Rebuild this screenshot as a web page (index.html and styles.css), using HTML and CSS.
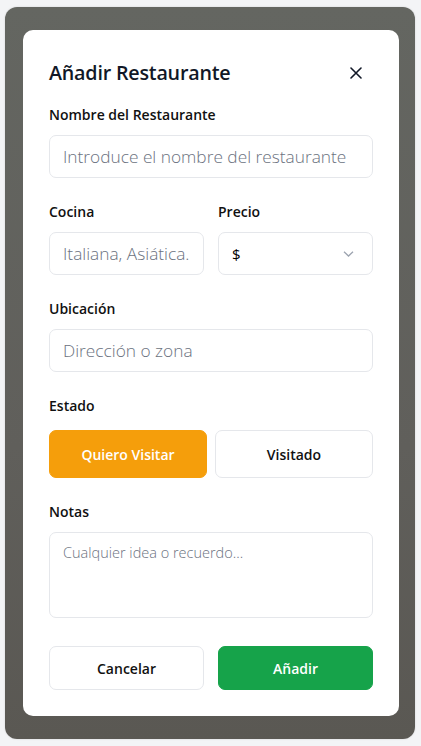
FILE: index.html
```html
<!DOCTYPE html>
<html lang="es">
<head>
<meta charset="utf-8">
<title>Añadir Restaurante</title>
<link rel="stylesheet" href="styles.css">
</head>
<body>
<div class="screen">
  <div class="overlay">
    <div class="modal">
      <div class="modal-head">
        <h2 class="title">Añadir Restaurante</h2>
        <button class="close" type="button" aria-label="Cerrar">
          <svg width="12" height="12" viewBox="0 0 12 12"><path d="M1 1L11 11M11 1L1 11" stroke="#111827" stroke-width="1.6" stroke-linecap="round"/></svg>
        </button>
      </div>

      <div class="field">
        <label class="label">Nombre del Restaurante</label>
        <input class="input" type="text" placeholder="Introduce el nombre del restaurante">
      </div>

      <div class="row">
        <div class="field">
          <label class="label">Cocina</label>
          <input class="input" type="text" placeholder="Italiana, Asiática...">
        </div>
        <div class="field">
          <label class="label">Precio</label>
          <div class="select">
            <span class="select-value">$</span>
            <svg class="chev" width="11" height="6" viewBox="0 0 11 6"><path d="M1 0.8L5.5 5L10 0.8" fill="none" stroke="#9ca3af" stroke-width="1.3"/></svg>
          </div>
        </div>
      </div>

      <div class="field">
        <label class="label">Ubicación</label>
        <input class="input" type="text" placeholder="Dirección o zona">
      </div>

      <div class="field">
        <label class="label label-status">Estado</label>
        <div class="status">
          <button class="status-btn active" type="button">Quiero Visitar</button>
          <button class="status-btn" type="button">Visitado</button>
        </div>
      </div>

      <div class="field">
        <label class="label">Notas</label>
        <textarea class="textarea" placeholder="Cualquier idea o recuerdo..."></textarea>
      </div>

      <div class="actions">
        <button class="btn btn-cancel" type="button">Cancelar</button>
        <button class="btn btn-add" type="button">Añadir</button>
      </div>
    </div>
  </div>
</div>
</body>
</html>
```

FILE: styles.css
```css
* { box-sizing: border-box; }
html, body { margin: 0; padding: 0; }
body {
  background: #f3f4f6;
  font-family: "Open Sans", "Noto Sans", sans-serif;
  color: #111827;
}
.screen {
  padding: 7px 6px 7px 5px;
  height: 746px;
}
.overlay {
  height: 732px;
  border-radius: 12px;
  background: linear-gradient(180deg, #646661 0%, #605f5b 60%, #5a5853 100%);
  padding: 23px 16px 23px 18px;
  box-shadow: 0 0 2px rgba(0,0,0,0.15);
}
.modal {
  background: #fff;
  border-radius: 10px;
  height: 686px;
  padding: 28px 26px 26px 26px;
}
.modal-head {
  display: flex;
  justify-content: space-between;
  align-items: center;
  margin-bottom: 17px;
}
.title {
  margin: 0;
  font-size: 19.7px;
  font-weight: 600;
  line-height: 30px;
  color: #111827;
  letter-spacing: -0.2px;
}
.close {
  border: 0;
  background: none;
  padding: 0;
  width: 12px;
  height: 12px;
  margin-right: 11px;
  display: flex;
}
.field { margin-bottom: 24px; }
.label {
  display: block;
  font-size: 14px;
  font-weight: 600;
  line-height: 20px;
  margin-bottom: 10px;
  color: #111;
}
.input, .select, .textarea {
  width: 100%;
  border: 1px solid #e5e7eb;
  border-radius: 7px;
  background: #fff;
  font-family: inherit;
  font-size: 17.3px;
  font-weight: 300;
  color: #111827;
  outline: none;
}
.input {
  height: 43px;
  padding: 0 13px;
}
.input::placeholder, .textarea::placeholder {
  color: #6b7280;
  opacity: 1;
}
.row {
  display: grid;
  grid-template-columns: 1fr 1fr;
  column-gap: 14px;
}
.select {
  height: 43px;
  display: flex;
  align-items: center;
  justify-content: space-between;
  padding: 0 18px 0 13px;
}
.select-value {
  font-size: 15px;
  font-weight: 400;
  color: #000;
}
.label-status { margin-bottom: 14px; }
.status {
  display: grid;
  grid-template-columns: 1fr 1fr;
  column-gap: 8px;
}
.status-btn {
  height: 48px;
  border: 1px solid #e5e7eb;
  border-radius: 7px;
  background: #fff;
  font-family: inherit;
  font-size: 14px;
  font-weight: 600;
  color: #111;
}
.status-btn.active {
  background: #f59e0b;
  border-color: #f59e0b;
  color: #fff;
}
.textarea {
  display: block;
  height: 86px;
  resize: none;
  padding: 10px 13px;
  font-size: 14.5px;
  line-height: 20px;
}
.actions {
  display: grid;
  grid-template-columns: 1fr 1fr;
  column-gap: 14px;
  margin-top: 28px;
}
.btn {
  height: 44px;
  border-radius: 7px;
  font-family: inherit;
  font-size: 14px;
  font-weight: 600;
}
.btn-cancel {
  background: #fff;
  border: 1px solid #e5e7eb;
  color: #111;
}
.btn-add {
  background: #16a34a;
  border: 1px solid #16a34a;
  color: #fff;
}
```
